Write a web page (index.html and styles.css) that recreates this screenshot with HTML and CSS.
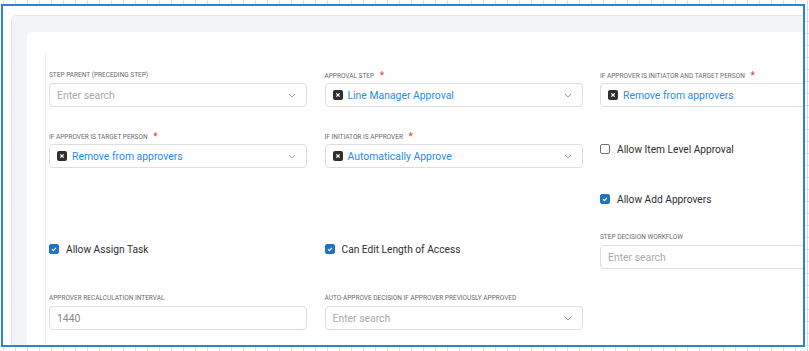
FILE: index.html
```html
<!DOCTYPE html>
<html lang="en">
<head>
    <meta charset="UTF-8">
    <meta name="viewport" content="width=device-width, initial-scale=1.0">
    <title>Approval Step</title>
    <link rel="stylesheet" href="styles.css">
</head>
<body>
    <div class="frame">
        <div class="panel">
            <div class="card">
                <div class="form">

                    <!-- colonne 1 -->
                    <div class="col">
                        <div class="field">
                            <div class="field-label">Step Parent (Preceding Step)</div>
                            <div class="select">
                                <span class="placeholder">Enter search</span>
                                <svg class="chevron" width="8" height="5" viewBox="0 0 8 5"><path d="M1 1l3 3 3-3" fill="none" stroke="#a0a0a0" stroke-width="1"/></svg>
                            </div>
                        </div>
                        <div class="field">
                            <div class="field-label">If approver is target person <span class="req">*</span></div>
                            <div class="select">
                                <span class="value"><span class="chip"><svg width="10" height="10" viewBox="0 0 10 10"><path d="M3.3 3.3l3.4 3.4M6.7 3.3L3.3 6.7" stroke="#fff" stroke-width="1.2"/></svg></span>Remove from approvers</span>
                                <svg class="chevron" width="8" height="5" viewBox="0 0 8 5"><path d="M1 1l3 3 3-3" fill="none" stroke="#a0a0a0" stroke-width="1"/></svg>
                            </div>
                        </div>
                        <div class="check check-low">
                            <span class="box checked"><svg width="10" height="10" viewBox="0 0 10 10"><path d="M3 5.2l1.4 1.4L7 3.8" fill="none" stroke="#fff" stroke-width="1.1"/></svg></span>
                            Allow Assign Task
                        </div>
                        <div class="field field-last">
                            <div class="field-label">Approver recalculation interval</div>
                            <div class="select">
                                <span class="plain">1440</span>
                            </div>
                        </div>
                    </div>

                    <!-- colonne 2 -->
                    <div class="col">
                        <div class="field">
                            <div class="field-label">Approval step <span class="req">*</span></div>
                            <div class="select">
                                <span class="value"><span class="chip"><svg width="10" height="10" viewBox="0 0 10 10"><path d="M3.3 3.3l3.4 3.4M6.7 3.3L3.3 6.7" stroke="#fff" stroke-width="1.2"/></svg></span>Line Manager Approval</span>
                                <svg class="chevron" width="8" height="5" viewBox="0 0 8 5"><path d="M1 1l3 3 3-3" fill="none" stroke="#a0a0a0" stroke-width="1"/></svg>
                            </div>
                        </div>
                        <div class="field">
                            <div class="field-label">If initiator is approver <span class="req">*</span></div>
                            <div class="select">
                                <span class="value"><span class="chip"><svg width="10" height="10" viewBox="0 0 10 10"><path d="M3.3 3.3l3.4 3.4M6.7 3.3L3.3 6.7" stroke="#fff" stroke-width="1.2"/></svg></span>Automatically Approve</span>
                                <svg class="chevron" width="8" height="5" viewBox="0 0 8 5"><path d="M1 1l3 3 3-3" fill="none" stroke="#a0a0a0" stroke-width="1"/></svg>
                            </div>
                        </div>
                        <div class="check check-low">
                            <span class="box checked"><svg width="10" height="10" viewBox="0 0 10 10"><path d="M3 5.2l1.4 1.4L7 3.8" fill="none" stroke="#fff" stroke-width="1.1"/></svg></span>
                            Can Edit Length of Access
                        </div>
                        <div class="field field-last">
                            <div class="field-label">Auto-approve decision if approver previously approved</div>
                            <div class="select">
                                <span class="placeholder">Enter search</span>
                                <svg class="chevron" width="8" height="5" viewBox="0 0 8 5"><path d="M1 1l3 3 3-3" fill="none" stroke="#a0a0a0" stroke-width="1"/></svg>
                            </div>
                        </div>
                    </div>

                    <!-- colonne 3 -->
                    <div class="col">
                        <div class="field">
                            <div class="field-label">If approver is initiator and target person <span class="req">*</span></div>
                            <div class="select">
                                <span class="value"><span class="chip"><svg width="10" height="10" viewBox="0 0 10 10"><path d="M3.3 3.3l3.4 3.4M6.7 3.3L3.3 6.7" stroke="#fff" stroke-width="1.2"/></svg></span>Remove from approvers</span>
                                <svg class="chevron" width="8" height="5" viewBox="0 0 8 5"><path d="M1 1l3 3 3-3" fill="none" stroke="#a0a0a0" stroke-width="1"/></svg>
                            </div>
                        </div>
                        <div class="check check-first">
                            <span class="box"></span>
                            Allow Item Level Approval
                        </div>
                        <div class="check check-second">
                            <span class="box checked"><svg width="10" height="10" viewBox="0 0 10 10"><path d="M3 5.2l1.4 1.4L7 3.8" fill="none" stroke="#fff" stroke-width="1.1"/></svg></span>
                            Allow Add Approvers
                        </div>
                        <div class="field field-after-check">
                            <div class="field-label">Step decision workflow</div>
                            <div class="select">
                                <span class="placeholder">Enter search</span>
                                <svg class="chevron" width="8" height="5" viewBox="0 0 8 5"><path d="M1 1l3 3 3-3" fill="none" stroke="#a0a0a0" stroke-width="1"/></svg>
                            </div>
                        </div>
                    </div>

                </div>
            </div>
        </div>
    </div>
</body>
</html>
```

FILE: styles.css
```css
body {
    margin: 0;
    padding: 0;
    font-family: 'Roboto', 'Liberation Sans', sans-serif;
    background-color: #ffffff;
    background-image:
        linear-gradient(to right, #dcdcdc 1px, transparent 1px),
        linear-gradient(to bottom, #dcdcdc 1px, transparent 1px);
    background-size: 12px 12px;
    background-position: 3px 9px;
    height: 351px;
    overflow: hidden;
}

.frame {
    margin: 4px 0 0 1px;
    width: 804px;
    height: 343px;
    box-sizing: border-box;
    border: 2px solid #2d84d2;
    background-color: #ffffff;
    overflow: hidden;
    padding: 9px 0 0 8px;
}

.panel {
    width: 900px;
    height: 400px;
    background-color: #f3f4f6;
    border: 1px solid #e3e5e9;
    border-radius: 5px;
    padding: 16px 0 0 15px;
    box-sizing: border-box;
}

.card {
    background-color: #ffffff;
    border-radius: 4px 0 0 0;
    height: 100%;
    padding: 20px 0 0 18px;
    box-sizing: border-box;
}

.form {
    display: grid;
    grid-template-columns: 258px 258px 258px;
    column-gap: 17.5px;
    height: 100%;
    padding: 19px 0 0 3px;
    border-left: 1px solid #f2f3f5;
    box-sizing: border-box;
}

.col {
    display: flex;
    flex-direction: column;
}

.field {
    display: flex;
    flex-direction: column;
}

.field + .field {
    margin-top: 25px;
}

.field-label {
    font-size: 6.5px;
    line-height: 9px;
    height: 9px;
    text-transform: uppercase;
    color: #6b6b6b;
    margin-bottom: 3px;
    white-space: nowrap;
}

.req {
    color: #e53935;
    font-size: 10px;
    margin-left: 4px;
    vertical-align: -1px;
}

.select {
    height: 24px;
    box-sizing: border-box;
    border: 1px solid #dedede;
    border-radius: 4px;
    display: flex;
    align-items: center;
    justify-content: space-between;
    padding: 0 10px 0 7px;
    font-size: 10.4px;
}

.placeholder {
    color: #a9a9a9;
}

.plain {
    color: #8a8a8a;
}

.value {
    display: flex;
    align-items: center;
    color: #2a8af0;
}

.chip {
    width: 10px;
    height: 10px;
    background-color: #2f2f2f;
    border-radius: 2px;
    margin-right: 5px;
    display: flex;
}

.chevron {
    flex-shrink: 0;
}

.check {
    display: flex;
    align-items: center;
    height: 14px;
    font-size: 10.2px;
    color: #2e2e2e;
    gap: 7px;
}

.box {
    width: 10px;
    height: 10px;
    box-sizing: border-box;
    border: 1px solid #6f6f6f;
    border-radius: 2px;
    background-color: #fff;
    display: flex;
}

.box.checked {
    background-color: #1f72c4;
    border-color: #1f72c4;
}

.box.checked svg {
    margin: -1px;
}

.check-low {
    margin-top: 74px;
}

.field.field-last {
    margin-top: 38px;
}

.check-first {
    margin-top: 35px;
}

.check-second {
    margin-top: 36px;
}

.field.field-after-check {
    margin-top: 27px;
}
```
